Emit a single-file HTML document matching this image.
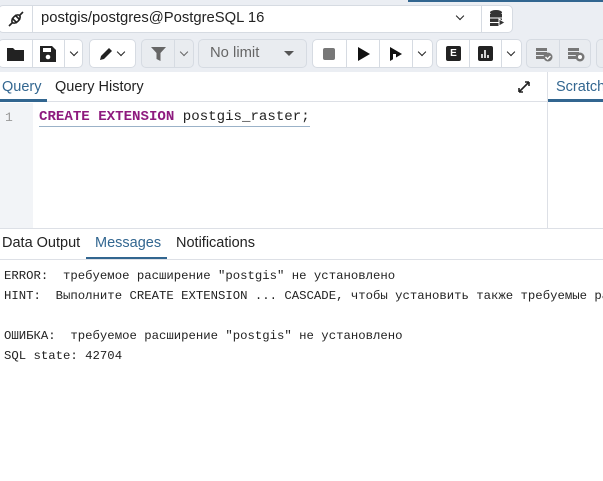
<!DOCTYPE html>
<html><head><meta charset="utf-8"><style>
*{box-sizing:border-box;margin:0;padding:0}
body{width:603px;height:481px;overflow:hidden;background:#fff;font-family:"Liberation Sans",sans-serif;position:relative}
.a{position:absolute}
.top{left:0;top:0;width:603px;height:72px;background:#ebeef3}
.btn{position:absolute;background:#fff;border:1px solid #d6dbe2;border-radius:5px;height:29px;top:39px}
.dis{background:#e9ecf0}
.sep{position:absolute;top:0;bottom:0;width:1px;background:#d6dbe2}
.car{position:absolute;top:9px;width:6px;height:6px;border-right:1.6px solid #222;border-bottom:1.6px solid #222;transform:rotate(45deg)}
.mono{font-family:"Liberation Mono","DejaVu Sans Mono",monospace}
.msg{font-family:"Liberation Mono","Noto Sans CJK SC",monospace;font-size:12.3px;color:#222;left:4px;white-space:pre;line-height:20px;width:599px;overflow:hidden}
</style></head><body>
<div class="a top"></div>
<div class="a" style="left:408px;top:0;width:195px;height:2px;background:#326690"></div>
<div class="a" style="left:-2px;top:5px;width:515px;height:28px;background:#fff;border:1px solid #d6dbe2;border-radius:5px"></div>
<div class="a" style="left:32px;top:6px;width:1px;height:26px;background:#d6dbe2"></div>
<div class="a" style="left:481px;top:6px;width:1px;height:26px;background:#d6dbe2"></div>
<svg class="a" style="left:7px;top:10px" width="18" height="18" viewBox="0 0 18 18" fill="none" stroke="#222" stroke-width="1.6"><path d="M2 16L6 12M16 2L12 6"/><ellipse cx="9" cy="9" rx="5" ry="3" transform="rotate(-45 9 9)"/><path d="M5 8l5 5M8 5l5 5"/></svg>
<div class="a" style="left:41px;top:10px;font-size:14.8px;color:#222">postgis/postgres@PostgreSQL 16</div>
<div class="car" style="left:457px;top:13px"></div>
<svg class="a" style="left:488px;top:9px" width="18" height="18" viewBox="0 0 18 18"><ellipse cx="8" cy="3.5" rx="6" ry="2.5" fill="#333"/><rect x="2" y="5" width="12" height="3.5" fill="#333"/><rect x="2" y="9.5" width="12" height="3.5" fill="#333"/><rect x="2" y="14" width="10" height="3" fill="#333"/><path d="M11 10l6 3.5-6 3.5z" fill="#333" stroke="#fff"/></svg>
<div class="btn" style="left:-2px;width:85px"><div class="sep" style="left:33px"></div><div class="sep" style="left:65px"></div>
<svg class="a" style="left:8px;top:7px" width="17" height="14"><path d="M0 1h6l2 2h9v11H0z" fill="#222"/></svg>
<svg class="a" style="left:41px;top:6px" width="16" height="16"><path d="M0 0h12l4 4v12H0z" fill="#222"/><rect x="3" y="2" width="8" height="4" fill="#fff"/><circle cx="8" cy="11" r="2.3" fill="#fff"/></svg>
<div class="car" style="left:72px"></div></div>
<div class="btn" style="left:89px;width:47px">
<svg class="a" style="left:8px;top:6px" width="16" height="16"><path d="M2 14l1-4 8-8 3 3-8 8z" fill="#222"/></svg>
<div class="car" style="left:28px"></div></div>
<div class="btn dis" style="left:141px;width:53px"><div class="sep" style="left:32px"></div>
<svg class="a" style="left:9px;top:7px" width="15" height="14"><path d="M0 0h15l-5.5 6v8l-4-2V6z" fill="#666"/></svg>
<div class="car" style="left:39px;border-color:#666"></div></div>
<div class="btn dis" style="left:198px;width:109px"><div class="a" style="left:11px;top:5px;font-size:14.8px;color:#666">No limit</div>
<svg class="a" style="left:85px;top:11px" width="10" height="6"><path d="M0 0h10L5 5z" fill="#555"/></svg></div>
<div class="btn" style="left:312px;width:121px"><div class="sep" style="left:33px"></div><div class="sep" style="left:66px"></div><div class="sep" style="left:99px"></div>
<div class="a" style="left:10px;top:8px;width:12px;height:12px;background:#777;border-radius:2px"></div>
<svg class="a" style="left:45px;top:7px" width="12" height="14"><path d="M0 0l12 7-12 7z" fill="#111"/></svg>
<svg class="a" style="left:77px;top:7px" width="12" height="14"><path d="M0 0l12 7-12 7z" fill="#111"/><rect x="3" y="7" width="3" height="7" fill="#fff"/></svg>
<div class="car" style="left:106px"></div></div>
<div class="btn" style="left:436px;width:86px"><div class="sep" style="left:32px"></div><div class="sep" style="left:64px"></div>
<div class="a" style="left:9px;top:6px;width:15px;height:15px;background:#222;border-radius:2px;color:#fff;font-size:10px;font-weight:bold;text-align:center;line-height:15px">E</div>
<svg class="a" style="left:41px;top:6px" width="15" height="15"><rect width="15" height="15" rx="2" fill="#222"/><path d="M4 12V8M7 12V4M10 12V9" stroke="#fff" stroke-width="1.6"/></svg>
<div class="car" style="left:71px"></div></div>
<div class="btn dis" style="left:526px;width:65px"><div class="sep" style="left:32px"></div>
<svg class="a" style="left:8px;top:6px" width="18" height="16"><path d="M1 2h11v3H1zM1 6h11v3H1zM1 10h8v3H1z" fill="#777"/><circle cx="13" cy="11" r="4.5" fill="#777"/><path d="M10.5 11l2 2 3-3" stroke="#fff" stroke-width="1.4" fill="none"/></svg>
<svg class="a" style="left:40px;top:6px" width="18" height="16"><path d="M1 2h11v3H1zM1 6h11v3H1zM1 10h8v3H1z" fill="#777"/><circle cx="13" cy="11" r="4.5" fill="#777"/><circle cx="13" cy="11" r="2" fill="#fff"/></svg></div>
<div class="btn dis" style="left:596px;width:7px;border-right:none;border-radius:5px 0 0 5px"></div>
<div class="a" style="left:0;top:72px;width:603px;height:30px;background:#fff;border-bottom:1px solid #dde0e6"></div>
<div class="a" style="left:2px;top:79px;font-size:14.5px;color:#326690">Query</div>
<div class="a" style="left:0;top:99px;width:47px;height:3px;background:#326690"></div>
<div class="a" style="left:55px;top:79px;font-size:14.5px;color:#222">Query History</div>
<svg class="a" style="left:517px;top:80px" width="14" height="14" fill="none" stroke="#222" stroke-width="1.6"><path d="M2 12L12 2M2 12V8M2 12h4M12 2H8M12 2v4"/></svg>
<div class="a" style="left:547px;top:72px;width:1px;height:157px;background:#dde0e6"></div>
<div class="a" style="left:556px;top:79px;font-size:14.5px;color:#326690;white-space:nowrap">Scratch</div>
<div class="a" style="left:548px;top:99px;width:55px;height:3px;background:#326690"></div>
<div class="a" style="left:0;top:103px;width:33px;height:125px;background:#f2f4f7"></div>
<div class="a mono" style="left:5px;top:110px;font-size:13px;color:#999">1</div>
<div class="a mono" style="left:39px;top:109px;font-size:14.1px;color:#222;border-bottom:1px solid #9bb2c8;line-height:17px;white-space:nowrap"><b style="color:#8e1a7e;font-weight:bold">CREATE EXTENSION</b> postgis_raster;</div>
<div class="a" style="left:0;top:228px;width:603px;height:1px;background:#dde0e6"></div>
<div class="a" style="left:2px;top:235px;font-size:14.5px;color:#222">Data Output</div>
<div class="a" style="left:95px;top:235px;font-size:14.5px;color:#326690">Messages</div>
<div class="a" style="left:86px;top:257px;width:81px;height:3px;background:#326690"></div>
<div class="a" style="left:176px;top:235px;font-size:14.5px;color:#222">Notifications</div>
<div class="a" style="left:0;top:259px;width:603px;height:1px;background:#dde0e6"></div>
<div class="a msg" style="top:266px">ERROR:  требуемое расширение "postgis" не установлено
HINT:  Выполните CREATE EXTENSION ... CASCADE, чтобы установить также требуемые расширения.

ОШИБКА:  требуемое расширение "postgis" не установлено
SQL state: 42704</div>
</body></html>
